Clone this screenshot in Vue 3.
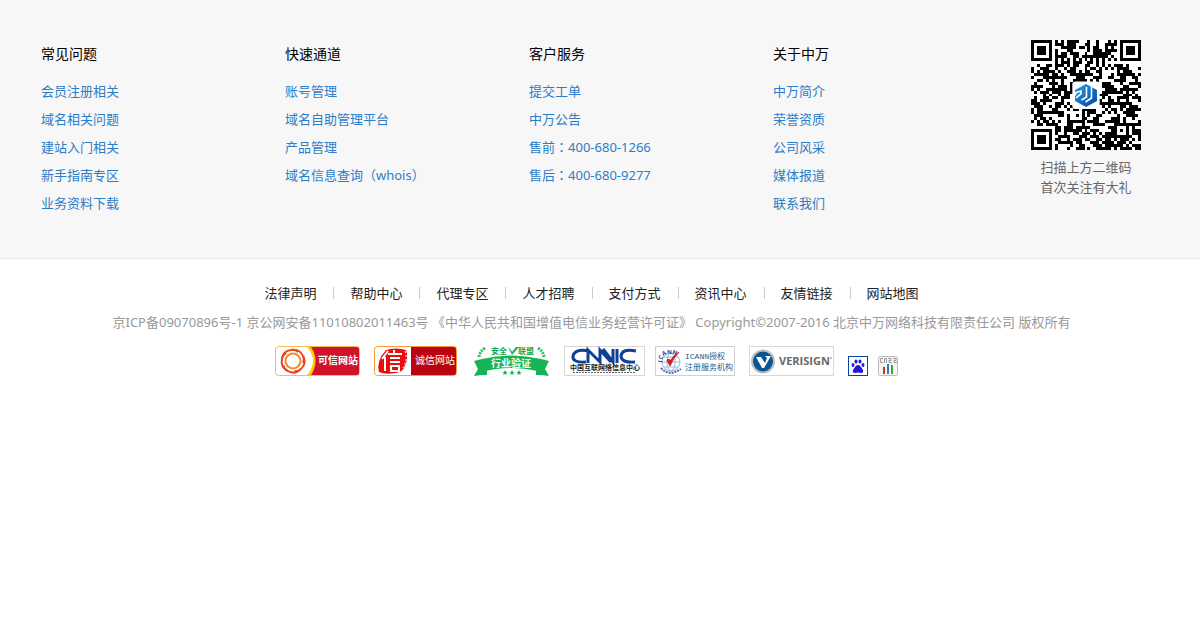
<script setup>
const columns = [
  { title: '常见问题', links: ['会员注册相关', '域名相关问题', '建站入门相关', '新手指南专区', '业务资料下载'] },
  { title: '快速通道', links: ['账号管理', '域名自助管理平台', '产品管理', '域名信息查询（whois）'] },
  { title: '客户服务', links: ['提交工单', '中万公告', '售前：400-680-1266', '售后：400-680-9277'] },
  { title: '关于中万', links: ['中万简介', '荣誉资质', '公司风采', '媒体报道', '联系我们'] }
]
const nav = ['法律声明', '帮助中心', '代理专区', '人才招聘', '支付方式', '资讯中心', '友情链接', '网站地图']
const split = (text) => text.split(/(：)/)

// 37 x 37 module code: finder squares, timing lines, alignment square, data area
const SIZE = 37
const ring = (dx, dy) => Math.max(Math.abs(dx), Math.abs(dy))
let seed = 20071
const next = () => {
  seed = (seed * 1103515245 + 12345) % 2147483648
  return seed / 2147483648
}
let qrPath = ''
for (let y = 0; y < SIZE; y++) {
  for (let x = 0; x < SIZE; x++) {
    let dark = next() < 0.56
    if (x === 6 || y === 6) dark = (x + y) % 2 === 0
    for (const [cx, cy] of [[3, 3], [33, 3], [3, 33]]) {
      const r = ring(x - cx, y - cy)
      if (r <= 4) dark = r < 2 || r === 3
    }
    const a = ring(x - 30, y - 30)
    if (a <= 2) dark = a !== 1
    if (dark) qrPath += `M${x} ${y}h1v1h-1z`
  }
}
</script>

<template>
  <footer>
    <section class="top">
      <nav v-for="c in columns" :key="c.title" class="col" :aria-label="c.title">
        <h2>{{ c.title }}</h2>
        <ul>
          <li v-for="l in c.links" :key="l">
            <a href="#"><span v-for="(t, i) in split(l)" :key="i" :class="{ colon: t === '：' }">{{ t }}</span></a>
          </li>
        </ul>
      </nav>
      <div class="scan">
        <svg class="qr" viewBox="0 0 37 37" role="img" aria-label="二维码">
          <defs>
            <linearGradient id="logo" x1="0" y1="0" x2="1" y2="1">
              <stop offset="0" stop-color="#22a0ee" />
              <stop offset="1" stop-color="#06459a" />
            </linearGradient>
          </defs>
          <rect width="37" height="37" fill="#fff" />
          <path :d="qrPath" fill="#000" shape-rendering="crispEdges" />
          <rect x="13.9" y="14" width="9.2" height="9.2" rx="1" fill="#fff" />
          <g transform="translate(14.8 14.8) scale(.336)">
            <path d="M11 0 22 6v11l-11 6-11-6v-5l2-2-2-1V6z" fill="url(#logo)" />
            <path d="M0 9l6-2v3l-5 4M11.500 3v10l-5 3M16.500 3v11l-6 4" fill="none" stroke="#fff" stroke-width="1.600" />
          </g>
        </svg>
        <p>扫描上方二维码<br>首次关注有大礼</p>
      </div>
    </section>

    <section class="bottom">
      <ul class="nav">
        <li v-for="n in nav" :key="n"><a href="#">{{ n }}</a></li>
      </ul>
      <p class="copy">京ICP备09070896号-1 京公网安备11010802011463号 《中华人民共和国增值电信业务经营许可证》 Copyright©2007-2016 北京中万网络科技有限责任公司 版权所有</p>
      <div class="badges">
        <a href="#" aria-label="可信网站">
          <svg width="85" height="30" viewBox="0 0 85 30">
            <rect x=".5" y=".5" width="84" height="29" rx="3" fill="#fff" stroke="#f3bd54" />
            <path d="M32 1h50q2 0 2 2v24q0 2-2 2H32q12-14 0-28z" fill="#fc0" />
            <path d="M36 1h46q2 0 2 2v24q0 2-2 2H36q9-14 0-28z" fill="#d0122b" />
            <g fill="none" stroke-width="2">
              <g stroke="#e84722">
                <path d="M7 13q1-8 9-9 4-1 7 2" />
                <path d="M7 13q1-8 9-9 4-1 7 2" transform="rotate(72 18 15)" />
                <path d="M7 13q1-8 9-9 4-1 7 2" transform="rotate(144 18 15)" />
                <path d="M7 13q1-8 9-9 4-1 7 2" transform="rotate(216 18 15)" />
                <path d="M7 13q1-8 9-9 4-1 7 2" transform="rotate(288 18 15)" />
              </g>
              <circle cx="18" cy="15" r="7.5" stroke="#f58a32" />
            </g>
            <text x="43" y="18" font-size="10" font-weight="700" fill="#fff">可信网站</text>
          </svg>
        </a>
        <a href="#" aria-label="诚信网站">
          <svg width="83" height="30" viewBox="0 0 83 30">
            <rect x=".5" y=".5" width="82" height="29" rx="3" fill="#fff" stroke="#f59b38" />
            <path d="M37 1h43q2 0 2 2v24q0 2-2 2H37z" fill="#ba0510" />
            <path d="M12 4q10-3 20 0 3 8-2 18-2 4-8 5-12 2-17-1-3-11 7-22z" fill="#e90d12" />
            <path d="M31 5q3 8-2 17" fill="none" stroke="#fff" stroke-width="1" stroke-dasharray="2 2" />
            <g fill="none" stroke="#fff" stroke-width="2">
              <path d="M14 5 8 13M11 11v14M20 4v4M14 8h14M16 12h10M16 16h10M17 20h8v5h-8z" />
            </g>
            <text x="41" y="18" font-size="10" fill="#fff">诚信网站</text>
          </svg>
        </a>
        <a href="#" aria-label="安全联盟行业验证">
          <svg width="79" height="30" viewBox="0 0 79 30">
            <g fill="#15b456">
              <path d="M3 15l8-2v12l5-1v5q-8 0-13 1l4-7zM78 15l-8-2v12l-5-1v5q8 0 13 1l-4-7z" />
              <path d="M11 13q29-7 59 0v13q-30-8-59 0z" />
              <path d="M37 1l3 3 1 2 4-5h3l-7 8z" />
              <path d="M34 24l1 2h2l-2 1 1 2-2-1-2 1 1-2-2-1h2zM41 24l1 2h2l-2 1 1 2-2-1-2 1 1-2-2-1h2zM48 24l1 2h2l-2 1 1 2-2-1-2 1 1-2-2-1h2z" />
            </g>
            <path d="M14 2q-6 4-6 10M67 2q6 4 6 10" fill="none" stroke="#33bd68" stroke-width="3" stroke-dasharray="2 1" />
            <text x="20" y="8" font-size="8" font-weight="700" fill="#15a750">安全</text>
            <text x="47" y="8" font-size="8" font-weight="700" fill="#15a750">联盟</text>
            <text x="20" y="21" font-size="10" font-weight="700" fill="#fff">行业验证</text>
          </svg>
        </a>
        <span class="pair">
          <a href="#" aria-label="中国互联网络信息中心">
            <svg width="81" height="30" viewBox="0 0 81 30">
              <rect x=".5" y=".5" width="80" height="29" fill="#fff" stroke="#d8d8d8" />
              <g fill="none" stroke="#123f96" stroke-width="3">
                <path d="M25 5q-14-3-16 5-1 7 13 6M24 17V4l12 12V4l11 12M39 3l10 13V3M53 3v14M72 5q-14-3-15 5 0 7 14 6" />
              </g>
              <text x="6" y="24" font-size="7" font-weight="700" fill="#222">中国互联网络信息中心</text>
              <path d="M9 26.500h63" stroke="#667" stroke-width="1" stroke-dasharray="2 1" />
            </svg>
          </a>
          <a href="#" aria-label="ICANN授权注册服务机构">
            <svg width="80" height="30" viewBox="0 0 80 30">
              <rect x=".5" y=".5" width="79" height="29" fill="#fff" stroke="#d0d0d0" />
              <g fill="none" stroke="#9eb6dc">
                <circle cx="16" cy="16" r="9" />
                <ellipse cx="16" cy="16" rx="4" ry="9" />
                <path d="M7 16h18M9 11h14M9 21h14" />
                <path d="M6 22q8 9 20 1" stroke="#456ab0" stroke-width="2" stroke-dasharray="2 1" />
              </g>
              <g class="sans" fill="#164da5" font-size="6" font-weight="700">
                <text transform="translate(7 17) rotate(-75)">I</text>
                <text transform="translate(6 14) rotate(-50)">C</text>
                <text transform="translate(8 10) rotate(-25)">A</text>
                <text transform="translate(12 8)">N</text>
                <text transform="translate(17 8) rotate(15)">N</text>
              </g>
              <path d="M12 14l3 6q3-8 9-14-6 4-9 9l-1-2z" fill="#d51920" stroke="#d51920" />
              <g fill="#245a94">
                <text class="mono" x="30" y="13" font-size="8">ICANN授权</text>
                <text x="30" y="24" font-size="8">注册服务机构</text>
              </g>
            </svg>
          </a>
        </span>
        <a href="#" aria-label="VeriSign">
          <svg width="85" height="30" viewBox="0 0 85 30">
            <rect x=".5" y=".5" width="84" height="29" fill="#fff" stroke="#d8d8d8" />
            <circle cx="14" cy="15.500" r="12" fill="#b9c0c5" />
            <circle cx="14" cy="15.500" r="10" fill="#0d5590" />
            <path d="M7 11h5l4 6 2-5-2-2h6l-7 12h-2z" fill="#fff" />
            <text class="sans" x="30" y="19" font-size="11" font-weight="700" fill="#66686b">VERISIGN</text>
            <path d="M81 12h2" stroke="#888" />
          </svg>
        </a>
        <span class="pair">
          <a href="#" aria-label="百度统计">
            <svg width="20" height="20" viewBox="0 0 20 20">
              <rect x=".5" y=".5" width="19" height="19" fill="#fff" stroke="#0544a4" />
              <g fill="#2019dc">
                <ellipse cx="5" cy="9" rx="1.500" ry="2" />
                <ellipse cx="8" cy="5.500" rx="1.500" ry="2" />
                <ellipse cx="12" cy="5.500" rx="1.500" ry="2" />
                <ellipse cx="15" cy="9" rx="1.500" ry="2" />
                <path d="M10 9q2 0 3 2l2 3q1 3-2 3l-3-.5-3 .5q-3 0-2-3l2-3q1-2 3-2z" />
              </g>
            </svg>
          </a>
          <a href="#" aria-label="CNZZ">
            <svg width="20" height="20" viewBox="0 0 20 20">
              <rect x=".5" y=".5" width="19" height="19" rx="2" fill="#f5f5f5" stroke="#bbb" />
              <path d="M5 2.500H2.500v4H5M6.500 7V2.500h2V7M10 2.500h3v2h-2v2h3M15 2.500h3v2h-2v2h3" fill="none" stroke="#999" />
              <path d="M5 11h2v7H5z" fill="#e3262e" />
              <path d="M9 8h2v10H9z" fill="#2780c4" />
              <path d="M13 9h2v9h-2z" fill="#4b9e26" />
            </svg>
          </a>
        </span>
      </div>
    </section>
  </footer>
</template>

<style>
body {
  margin: 0;
  background: #fff;
}
</style>

<style scoped>
footer {
  font: 13px/20px "Noto Sans", "Noto Sans CJK SC", sans-serif;
}
h2, ul, p {
  margin: 0;
  padding: 0;
  list-style: none;
}
a {
  text-decoration: none;
}
svg {
  display: block;
}
svg text {
  font-family: "Noto Sans CJK SC", sans-serif;
}
svg .sans, svg .sans text {
  font-family: "Open Sans", sans-serif;
}
svg .mono {
  font-family: "Liberation Mono", "Noto Sans CJK SC", monospace;
}
.top {
  display: grid;
  grid-template-columns: repeat(4, 244fr) 138fr;
  padding: 40px 45px 41px 41px;
  background: #f7f7f7;
  border-bottom: 1px solid #e8e8e8;
}
h2 {
  margin-bottom: 9px;
  font-size: 14px;
  font-weight: 400;
  line-height: 28px;
  color: #000;
}
.col li {
  line-height: 28px;
  white-space: nowrap;
}
.col a {
  color: #2d7dc7;
}
.colon {
  font-family: "Noto Sans CJK TC", sans-serif;
}
.scan {
  text-align: center;
  color: #666;
}
.qr {
  width: 110px;
  height: 110px;
  margin: 0 auto 7px;
}
.bottom {
  padding: 24px 17px 24px 0;
}
.nav {
  display: flex;
  justify-content: center;
}
.nav li {
  display: flex;
  align-items: center;
}
.nav li + li::before {
  content: "";
  width: 1px;
  height: 12px;
  margin: 0 16px 0 17px;
  background: #ccc;
}
.nav a {
  color: #222;
}
.copy {
  margin: 9px 0 14px;
  text-align: center;
  color: #999;
}
.badges {
  display: flex;
  justify-content: center;
  align-items: flex-end;
  gap: 14px;
  padding-right: 10px;
}
.pair {
  display: flex;
  align-items: flex-end;
  gap: 10px;
}
</style>
